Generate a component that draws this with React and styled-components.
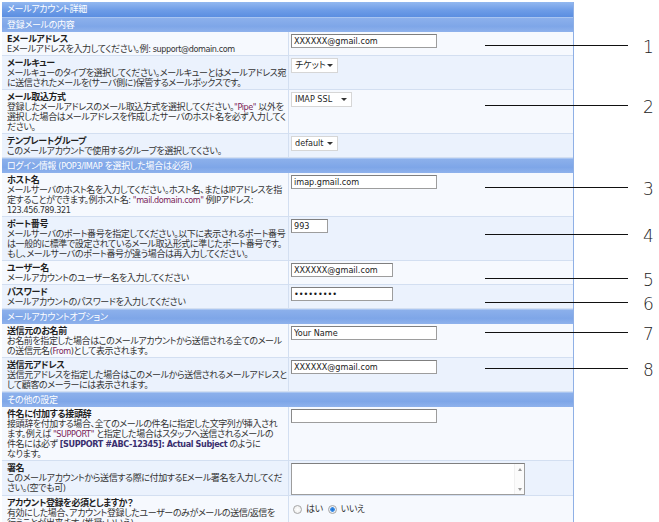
import React from 'react';
import styled, { createGlobalStyle } from 'styled-components';

const GlobalStyle = createGlobalStyle`
  html, body { margin: 0; padding: 0; background: #ffffff; }
  #root { width: 659px; height: 522px; }
`;

const Canvas = styled.div`
  position: relative;
  width: 659px;
  height: 522px;
  overflow: hidden;
  box-sizing: border-box;
  padding: 2px 0 0 2px;
  font-family: "DejaVu Sans Condensed", "Noto Sans CJK JP", sans-serif;
  font-feature-settings: "palt";
  font-size: 9px;
  color: #2b2b2b;
`;

const Panel = styled.div`
  width: 572px;
  border-right: 1px solid #8fb0e6;
  box-sizing: border-box;
`;

const TitleBar = styled.div`
  height: 15px;
  line-height: 15px;
  padding-left: 5px;
  color: #ffffff;
  letter-spacing: -0.3px;
  background: linear-gradient(#93b8f0 0%, #6d9ce7 55%, #5b8ee1 100%);
`;

const SectionBar = styled.div`
  height: 15px;
  line-height: 14px;
  padding-left: 5px;
  color: #ffffff;
  letter-spacing: -0.3px;
  background: linear-gradient(#8cb0eb 0%, #7ea6e8 60%, #8fb2ec 100%);
  border-top: 1px solid #a9c5f1;
  box-sizing: border-box;
`;

const Row = styled.div`
  display: grid;
  grid-template-columns: 287px 1fr;
  background: ${(p) => (p.$alt ? '#ebf2fd' : '#f6f9fe')};
  border-bottom: 1px solid #d3dff1;
`;

const LabelCell = styled.div`
  padding: 2px 2px 1px 5px;
  border-right: 1px solid #d3dff1;
  line-height: 10px;
  min-width: 0;
  white-space: nowrap;
  letter-spacing: -0.4px;
`;

const FieldLabel = styled.div`
  font-weight: 700;
  color: #1f1f1f;
`;

const Desc = styled.div`
  color: #333333;
`;

const Quoted = styled.span`
  color: #7a2457;
`;

const StrongSubject = styled.span`
  font-weight: 700;
  color: #3a2f6e;
`;

const ValueCell = styled.div`
  padding: 2px 0 0 2px;
  display: flex;
  align-items: flex-start;
`;

const TextInput = styled.input`
  width: ${(p) => p.$w}px;
  height: 14px;
  box-sizing: border-box;
  margin: 0;
  padding: 0 2px;
  border: 1px solid #9d9d9d;
  border-top-color: #7f7f7f;
  border-left-color: #8a8a8a;
  background: #ffffff;
  font-family: "DejaVu Sans Condensed", sans-serif;
  font-size: 9px;
  color: #1a1a1a;
  outline: none;
`;

const SelectBox = styled.div`
  display: inline-flex;
  align-items: center;
  justify-content: space-between;
  width: ${(p) => p.$w}px;
  height: 15px;
  box-sizing: border-box;
  border: 1px solid #d6d6d6;
  background: #ffffff;
  padding: 0 4px 0 3px;
  color: #1f1f1f;
  line-height: 13px;
`;

const Caret = styled.span`
  width: 0;
  height: 0;
  border-left: 3px solid transparent;
  border-right: 3px solid transparent;
  border-top: 3px solid #333333;
`;

const TextArea = styled.div`
  display: flex;
  justify-content: flex-end;
  width: 234px;
  height: 32px;
  box-sizing: border-box;
  border: 1px solid #9d9d9d;
  border-top-color: #7f7f7f;
  background: #ffffff;
`;

const ScrollTrack = styled.div`
  width: 9px;
  display: flex;
  flex-direction: column;
  justify-content: space-between;
  align-items: center;
  padding: 4px 0 3px;
  background: #fbfbfb;
  border-left: 1px solid #f0f0f0;
`;

const ScrollArrow = styled.span`
  width: 0;
  height: 0;
  border-left: 2px solid transparent;
  border-right: 2px solid transparent;
  ${(p) => (p.$up ? 'border-bottom: 3px solid #9a9a9a;' : 'border-top: 3px solid #9a9a9a;')}
`;

const RadioGroup = styled.div`
  display: flex;
  align-items: center;
  gap: 3px;
  padding: 6px 0 0 2px;
  line-height: 10px;
  letter-spacing: -0.4px;
`;

const RadioDot = styled.span`
  width: 9px;
  height: 9px;
  box-sizing: border-box;
  border-radius: 50%;
  border: 1px solid #a6a6a6;
  background: ${(p) =>
    p.$checked
      ? 'radial-gradient(circle, #1c6fd0 0, #3d8fe6 2px, #e8eef6 2.6px, #f4f4f4 100%)'
      : 'radial-gradient(circle, #ffffff 0, #e9e9e9 100%)'};
  margin-right: 1px;
`;

const RadioText = styled.span`
  color: #333;
  margin-right: 2px;
`;

const Callout = styled.div`
  position: absolute;
  left: 485px;
  top: ${(p) => p.$y - 10}px;
  height: 20px;
  display: flex;
  align-items: center;
`;

const CalloutLine = styled.span`
  width: 143px;
  height: 1px;
  background: #111111;
`;

const CalloutNum = styled.span`
  margin-left: 15px;
  padding-top: 4px;
  font-family: "DejaVu Sans", sans-serif;
  font-weight: 200;
  font-size: 17px;
  color: #222222;
`;

const Select = ({ w, children }) => (
  <SelectBox $w={w}>
    <span>{children}</span>
    <Caret />
  </SelectBox>
);

const Field = ({ alt, label, children, value }) => (
  <Row $alt={alt}>
    <LabelCell>
      <FieldLabel>{label}</FieldLabel>
      <Desc>{children}</Desc>
    </LabelCell>
    <ValueCell>{value}</ValueCell>
  </Row>
);

const callouts = [
  { n: 1, y: 45 },
  { n: 2, y: 105 },
  { n: 3, y: 187 },
  { n: 4, y: 234 },
  { n: 5, y: 278 },
  { n: 6, y: 302 },
  { n: 7, y: 332 },
  { n: 8, y: 368 },
];

export default function App() {
  return (
    <>
      <GlobalStyle />
      <Canvas>
        <Panel>
          <TitleBar>メールアカウント詳細</TitleBar>
          <SectionBar>登録メールの内容</SectionBar>
          <Field
            label="Eメールアドレス"
            value={<TextInput $w={146} readOnly value="XXXXXX@gmail.com" />}
          >
            Eメールアドレスを入力してください。例: support@domain.com
          </Field>
          <Field alt label="メールキュー" value={<Select w={47}>チケット</Select>}>
            メールキューのタイプを選択してください。メールキューとはメールアドレス宛
            <br />
            に送信されたメールを(サーバ側に)保管するメールボックスです。
          </Field>
          <Field label="メール取込方式" value={<Select w={61}>IMAP SSL</Select>}>
            登録したメールアドレスのメール取込方式を選択してください。<Quoted>"Pipe"</Quoted> 以外を
            <br />
            選択した場合はメールアドレスを作成したサーバのホスト名を必ず入力してく
            <br />
            ださい。
          </Field>
          <Field alt label="テンプレートグループ" value={<Select w={47}>default</Select>}>
            このメールアカウントで使用するグループを選択してくさい。
          </Field>

          <SectionBar>ログイン情報 (POP3/IMAP を選択した場合は必須)</SectionBar>
          <Field label="ホスト名" value={<TextInput $w={146} readOnly value="imap.gmail.com" />}>
            メールサーバのホスト名を入力してください。ホスト名、またはIPアドレスを指
            <br />
            定することができます。例ホスト名: <Quoted>"mail.domain.com"</Quoted> 例IPアドレス:
            <br />
            123.456.789.321
          </Field>
          <Field alt label="ポート番号" value={<TextInput $w={37} readOnly value="993" />}>
            メールサーバのポート番号を指定してください。以下に表示されるポート番号
            <br />
            は一般的に標準で設定されているメール取込形式に準じたポート番号です。
            <br />
            もし、メールサーバのポート番号が違う場合は再入力してください。
          </Field>
          <Field label="ユーザー名" value={<TextInput $w={102} readOnly value="XXXXXX@gmail.com" />}>
            メールアカウントのユーザー名を入力してください
          </Field>
          <Field alt label="パスワード" value={<TextInput $w={102} type="password" readOnly value="123456789" />}>
            メールアカウントのパスワードを入力してください
          </Field>

          <SectionBar>メールアカウントオプション</SectionBar>
          <Field label="送信元のお名前" value={<TextInput $w={146} readOnly value="Your Name" />}>
            お名前を指定した場合はこのメールアカウントから送信される全てのメール
            <br />
            の送信元名(<Quoted>From</Quoted>)として表示されます。
          </Field>
          <Field alt label="送信元アドレス" value={<TextInput $w={146} readOnly value="XXXXXX@gmail.com" />}>
            送信元アドレスを指定した場合はこのメールから送信されるメールアドレスと
            <br />
            して顧客のメーラーには表示されます。
          </Field>

          <SectionBar>その他の設定</SectionBar>
          <Field label="件名に付加する接頭辞" value={<TextInput $w={146} readOnly value="" />}>
            接頭辞を付加する場合、全てのメールの件名に指定した文字列が挿入され
            <br />
            ます。例えば <Quoted>"SUPPORT"</Quoted> と指定した場合はスタッフへ送信されるメールの
            <br />
            件名には必ず <StrongSubject>[SUPPORT #ABC-12345]: Actual Subject</StrongSubject> のように
            <br />
            なります。
          </Field>
          <Field
            alt
            label="署名"
            value={
              <TextArea>
                <ScrollTrack>
                  <ScrollArrow $up />
                  <ScrollArrow />
                </ScrollTrack>
              </TextArea>
            }
          >
            このメールアカウントから送信する際に付加するEメール署名を入力してくだ
            <br />
            さい。(空でも可)
          </Field>
          <Field
            label="アカウント登録を必須としますか？"
            value={
              <RadioGroup>
                <RadioDot />
                <RadioText>はい</RadioText>
                <RadioDot $checked />
                <RadioText>いいえ</RadioText>
              </RadioGroup>
            }
          >
            有効にした場合、アカウント登録したユーザーのみがメールの送信/返信を
            <br />
            行うことが出来ます。(推奨: いいえ)
          </Field>
        </Panel>

        {callouts.map((c) => (
          <Callout key={c.n} $y={c.y}>
            <CalloutLine />
            <CalloutNum>{c.n}</CalloutNum>
          </Callout>
        ))}
      </Canvas>
    </>
  );
}
